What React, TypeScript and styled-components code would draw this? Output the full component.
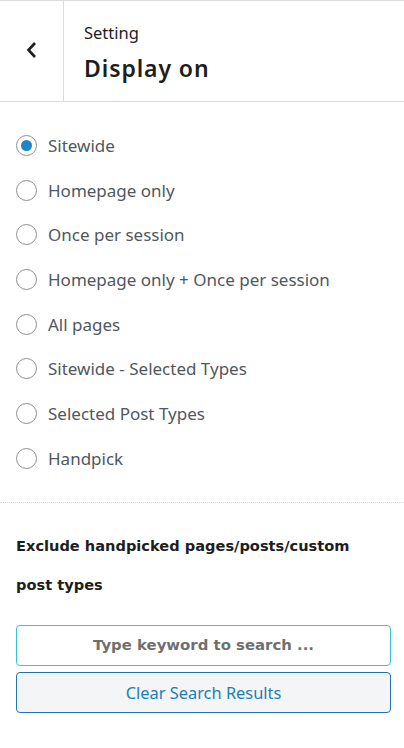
import React, { useState } from "react";
import styled, { createGlobalStyle } from "styled-components";

const GlobalStyle = createGlobalStyle`
  html, body {
    margin: 0;
    padding: 0;
    background: #fff;
  }
  body {
    font-family: "Noto Sans", "Open Sans", sans-serif;
    color: #1e1e1e;
  }
  * { box-sizing: border-box; }
`;

const Panel = styled.div`
  width: 404px;
  min-height: 748px;
  background: #fff;
  border-top: 1px solid #dcdcde;
`;

const Header = styled.header`
  display: flex;
  height: 101px;
  border-bottom: 1px solid #dcdcde;
`;

const BackButton = styled.button`
  width: 64px;
  flex: none;
  display: flex;
  align-items: center;
  justify-content: center;
  border: 0;
  border-right: 1px solid #dcdcde;
  background: transparent;
  padding: 0 0 2px;
  color: #1e1e1e;
  cursor: pointer;
`;

const Titles = styled.div`
  display: flex;
  flex-direction: column;
  justify-content: center;
  padding: 3px 0 0 20px;
`;

const Crumb = styled.span`
  font-size: 16.5px;
  line-height: 22px;
  color: #1e1e1e;
`;

const Title = styled.h2`
  margin: 8px 0 0;
  font-size: 23px;
  line-height: 32px;
  letter-spacing: 0.9px;
  font-weight: 600;
  color: #1e1e1e;
`;

const Options = styled.div`
  display: flex;
  flex-direction: column;
  padding: 21px 16px 21px;
  border-bottom: 1px dotted #dcdcde;
`;

const OptionRow = styled.label`
  display: flex;
  align-items: center;
  gap: 11px;
  height: 44.7px;
  font-size: 17px;
  color: #50575e;
  cursor: pointer;
`;

const Radio = styled.span<{ $checked: boolean }>`
  width: 21px;
  height: 21px;
  flex: none;
  border-radius: 50%;
  border: 1px solid #8c8f94;
  display: flex;
  align-items: center;
  justify-content: center;
  &::after {
    content: "";
    width: 11px;
    height: 11px;
    border-radius: 50%;
    background: #1e86c8;
    display: ${(p) => (p.$checked ? "block" : "none")};
  }
`;

const Exclude = styled.section`
  padding: 23px 13px 0 16px;
`;

const ExcludeTitle = styled.h3`
  margin: 0 0 21px;
  padding-right: 20px;
  font-family: "DejaVu Sans", Verdana, sans-serif;
  font-weight: 700;
  font-size: 14.6px;
  line-height: 39px;
  color: #1e1e1e;
`;

const SearchInput = styled.input`
  display: block;
  width: 100%;
  height: 41px;
  border: 1px solid #35c3d9;
  border-radius: 4px;
  background: #fff;
  text-align: center;
  font-family: "DejaVu Sans", Verdana, sans-serif;
  font-weight: 700;
  font-size: 14.9px;
  color: #50575e;
  outline: none;
  &::placeholder {
    color: #6f6f6f;
  }
`;

const ClearButton = styled.button`
  display: block;
  width: 100%;
  height: 41px;
  margin-top: 6px;
  border: 1px solid #2271b1;
  border-radius: 4px;
  background: #f4f5f6;
  font-family: "Noto Sans", "Open Sans", sans-serif;
  font-size: 16.4px;
  color: #1a7fb5;
  cursor: pointer;
`;

const options = [
  "Sitewide",
  "Homepage only",
  "Once per session",
  "Homepage only + Once per session",
  "All pages",
  "Sitewide - Selected Types",
  "Selected Post Types",
  "Handpick",
];

export default function App() {
  const [selected, setSelected] = useState("Sitewide");
  return (
    <Panel>
      <GlobalStyle />
      <Header>
        <BackButton aria-label="Back">
          <svg width="14" height="20" viewBox="0 0 14 20" fill="none">
            <path d="M10 3 L3.5 10 L10 17" stroke="#1e1e1e" strokeWidth="2.6" />
          </svg>
        </BackButton>
        <Titles>
          <Crumb>Setting</Crumb>
          <Title>Display on</Title>
        </Titles>
      </Header>
      <Options>
        {options.map((o) => (
          <OptionRow key={o} onClick={() => setSelected(o)}>
            <Radio $checked={selected === o} />
            {o}
          </OptionRow>
        ))}
      </Options>
      <Exclude>
        <ExcludeTitle>Exclude handpicked pages/posts/custom post types</ExcludeTitle>
        <SearchInput placeholder="Type keyword to search ..." />
        <ClearButton>Clear Search Results</ClearButton>
      </Exclude>
    </Panel>
  );
}
